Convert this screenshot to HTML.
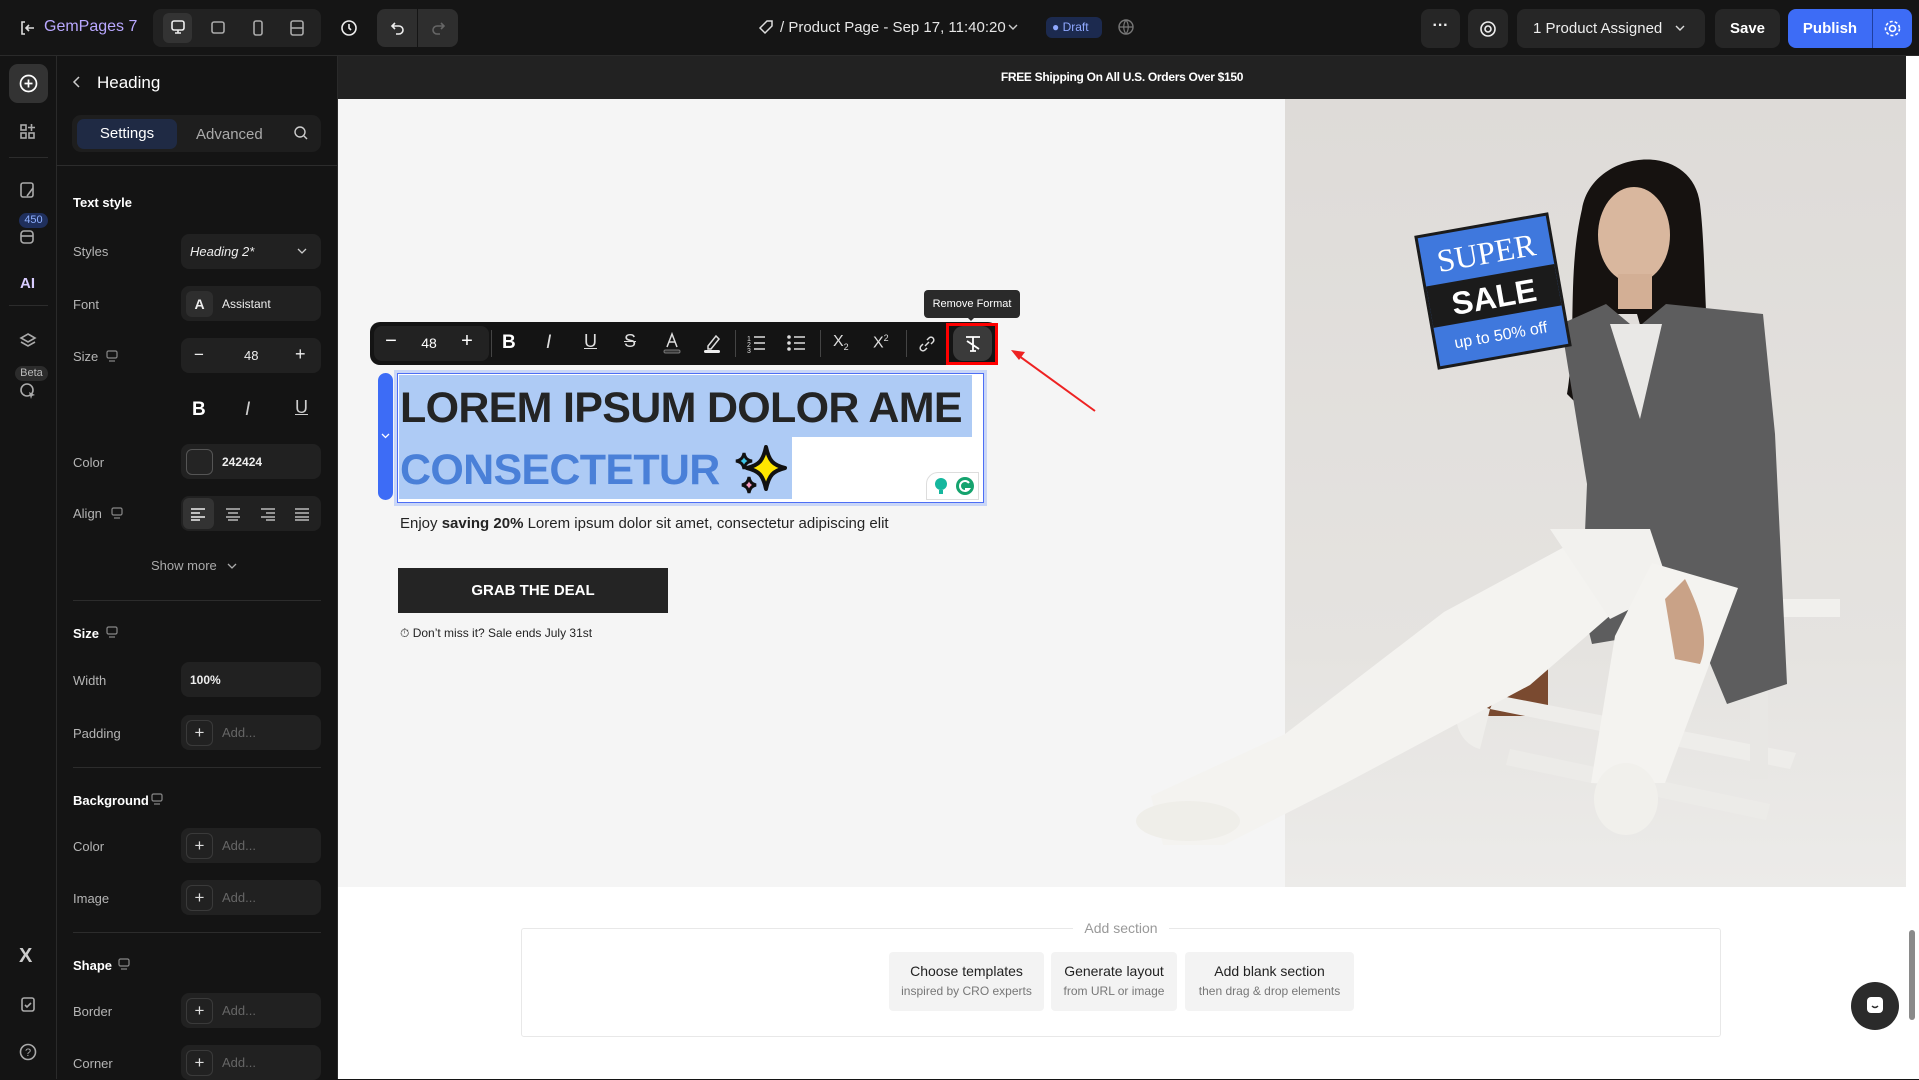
<!DOCTYPE html>
<html><head><meta charset="utf-8"><style>
*{box-sizing:border-box;margin:0;padding:0}
body{width:1919px;height:1079px;overflow:hidden;background:#141414;font-family:"Liberation Sans",sans-serif;position:relative}
.a{position:absolute}
.top{left:0;top:0;width:1919px;height:56px;background:#151515;border-bottom:1px solid #2a2a2a}
.box{background:#262626;border-radius:8px}
.lbl{position:absolute;left:73px;color:#b5b5b5;font-size:13px}
.ctl{position:absolute;left:181px;width:140px;height:35px;background:#212121;border-radius:8px;color:#eee;font-size:13px}
.plus{position:absolute;left:5px;top:5px;width:27px;height:26px;border:1px solid #3a3a3a;border-radius:6px;color:#ddd;text-align:center;line-height:24px;font-size:17px}
.add{position:absolute;left:41px;top:10px;color:#666;font-size:13px}
.sec{position:absolute;left:73px;color:#fff;font-size:13px;font-weight:bold}
.div{position:absolute;left:73px;width:248px;height:1px;background:#2c2c2c}
.ico{stroke:#aaa;fill:none;stroke-width:1.6}
.tb{position:absolute;top:10px;color:#fff;font-size:20px;text-align:center;width:30px}
</style></head><body>

<!-- top bar -->
<div class="a top"></div>
<svg class="a" style="left:18px;top:19px" width="18" height="18" viewBox="0 0 18 18"><path d="M7 3H4v12h3M8 9h8M11 6l-3 3 3 3" stroke="#ddd" stroke-width="1.6" fill="none"/></svg>
<div class="a" style="left:44px;top:18px;color:#b9a8ff;font-size:16px">GemPages 7</div>
<div class="a box" style="left:153px;top:9px;width:168px;height:38px;background:#222"></div>
<div class="a" style="left:163px;top:13px;width:29px;height:30px;background:#333;border-radius:6px"></div>
<svg class="a" style="left:169px;top:19px" width="18" height="18"><rect x="3" y="2" width="12" height="9" rx="2" stroke="#eee" stroke-width="1.6" fill="none"/><path d="M6 14h6M9 11v3" stroke="#eee" stroke-width="1.6"/></svg>
<svg class="a" style="left:209px;top:19px" width="18" height="18"><rect x="3" y="3" width="12" height="11" rx="2" class="ico" stroke="#777"/></svg>
<svg class="a" style="left:249px;top:19px" width="18" height="18"><rect x="5" y="2" width="8" height="14" rx="2" class="ico" stroke="#777"/></svg>
<svg class="a" style="left:288px;top:19px" width="18" height="18"><rect x="3" y="2" width="12" height="14" rx="2" class="ico" stroke="#777"/><path d="M3 9h12" class="ico" stroke="#777"/></svg>
<svg class="a" style="left:340px;top:19px" width="18" height="18"><circle cx="9" cy="9" r="7" stroke="#eee" stroke-width="1.6" fill="none"/><path d="M9 5v4l2 2" stroke="#eee" stroke-width="1.6" fill="none"/></svg>
<div class="a" style="left:377px;top:9px;width:81px;height:38px;background:#2e2e2e;border-radius:8px"></div>
<div class="a" style="left:417px;top:9px;width:1px;height:38px;background:#151515"></div>
<svg class="a" style="left:389px;top:19px" width="18" height="18"><path d="M6 4L3 7l3 3M3 7h7a4 4 0 010 8H7" stroke="#eee" stroke-width="1.6" fill="none"/></svg>
<svg class="a" style="left:429px;top:19px" width="18" height="18"><path d="M12 4l3 3-3 3M15 7H8a4 4 0 000 8h3" stroke="#666" stroke-width="1.6" fill="none"/></svg>
<svg class="a" style="left:758px;top:19px" width="16" height="16"><path d="M9 2h5v5l-7 7-5-5z" stroke="#ddd" stroke-width="1.5" fill="none"/></svg>
<div class="a" style="left:780px;top:19px;color:#e6e6e6;font-size:15px">/ Product Page - Sep 17, 11:40:20</div>
<svg class="a" style="left:1007px;top:22px" width="12" height="10"><path d="M2 3l4 4 4-4" stroke="#ccc" stroke-width="1.4" fill="none"/></svg>
<div class="a" style="left:1046px;top:17px;width:56px;height:21px;background:#1c2a4f;border-radius:6px;color:#8fa8ff;font-size:12px;line-height:21px;padding-left:6px">● Draft</div>
<svg class="a" style="left:1117px;top:18px" width="18" height="18"><circle cx="9" cy="9" r="7" stroke="#777" stroke-width="1.4" fill="none"/><path d="M2 9h14M9 2c-3 4-3 10 0 14M9 2c3 4 3 10 0 14" stroke="#777" stroke-width="1.2" fill="none"/></svg>
<div class="a box" style="left:1421px;top:9px;width:39px;height:39px;color:#eee;text-align:center;line-height:34px;font-size:16px;font-weight:bold">···</div>
<div class="a box" style="left:1468px;top:9px;width:40px;height:39px"></div>
<svg class="a" style="left:1478px;top:19px" width="20" height="20"><circle cx="10" cy="10" r="7" stroke="#eee" stroke-width="1.6" fill="none"/><circle cx="10" cy="10" r="3" stroke="#eee" stroke-width="1.6" fill="none"/></svg>
<div class="a box" style="left:1517px;top:9px;width:188px;height:39px;color:#eee;font-size:15px;line-height:39px;padding-left:16px">1 Product Assigned</div>
<svg class="a" style="left:1674px;top:23px" width="12" height="10"><path d="M2 3l4 4 4-4" stroke="#ddd" stroke-width="1.4" fill="none"/></svg>
<div class="a box" style="left:1715px;top:9px;width:65px;height:39px;color:#fff;font-size:15px;line-height:39px;text-align:center;font-weight:bold">Save</div>
<div class="a" style="left:1788px;top:9px;width:124px;height:39px;background:#3d6cf6;border-radius:8px"></div>
<div class="a" style="left:1788px;top:9px;width:84px;height:39px;color:#fff;font-size:15px;line-height:39px;text-align:center;font-weight:bold">Publish</div>
<div class="a" style="left:1872px;top:9px;width:1px;height:39px;background:#1f3fa0"></div>
<svg class="a" style="left:1883px;top:19px" width="19" height="19"><circle cx="9.5" cy="9.5" r="3" stroke="#fff" stroke-width="1.6" fill="none"/><circle cx="9.5" cy="9.5" r="7" stroke="#fff" stroke-width="1.6" fill="none" stroke-dasharray="3 2"/></svg>

<!-- rail -->
<div class="a" style="left:56px;top:56px;width:1px;height:1023px;background:#2a2a2a"></div>
<div class="a" style="left:9px;top:64px;width:39px;height:39px;background:#333;border-radius:9px"></div>
<svg class="a" style="left:18px;top:73px" width="21" height="21"><circle cx="10.5" cy="10.5" r="8" stroke="#fff" stroke-width="1.7" fill="none"/><path d="M10.5 6.5v8M6.5 10.5h8" stroke="#fff" stroke-width="1.7"/></svg>
<svg class="a" style="left:19px;top:123px" width="18" height="18"><rect x="2" y="2" width="5" height="5" class="ico"/><rect x="2" y="10" width="5" height="5" class="ico"/><rect x="10" y="10" width="5" height="5" class="ico"/><path d="M12.5 1v7M9 4.5h7" class="ico"/></svg>
<div class="a" style="left:9px;top:157px;width:39px;height:1px;background:#2c2c2c"></div>
<svg class="a" style="left:19px;top:181px" width="18" height="18"><rect x="2" y="2" width="12" height="14" rx="2" class="ico"/><path d="M8 15l6-8" class="ico"/></svg>
<div class="a" style="left:19px;top:213px;width:29px;height:15px;background:#1f2f5c;border-radius:8px;color:#8fb0ff;font-size:11px;text-align:center;line-height:15px">450</div>
<svg class="a" style="left:19px;top:229px" width="18" height="16"><rect x="2" y="2" width="12" height="12" rx="3" class="ico"/><path d="M2 7h12" class="ico"/></svg>
<div class="a" style="left:20px;top:275px;color:#d8ccff;font-size:15px;font-weight:bold">AI</div>
<div class="a" style="left:9px;top:305px;width:39px;height:1px;background:#2c2c2c"></div>
<svg class="a" style="left:19px;top:332px" width="18" height="18"><path d="M9 2l7 4-7 4-7-4z M2 10l7 4 7-4" class="ico"/></svg>
<div class="a" style="left:15px;top:366px;width:33px;height:15px;background:#2c2c2c;border-radius:8px;color:#bbb;font-size:11px;text-align:center;line-height:15px">Beta</div>
<svg class="a" style="left:19px;top:382px" width="18" height="18"><circle cx="8" cy="8" r="6" class="ico"/><path d="M10 10l6 3-3 1-1 3z" fill="#aaa"/></svg>
<div class="a" style="left:19px;top:945px;color:#ccc;font-size:20px;font-weight:bold">X</div>
<svg class="a" style="left:19px;top:995px" width="18" height="18"><rect x="3" y="3" width="12" height="13" rx="2" class="ico"/><path d="M6 10l2 2 4-4" class="ico"/></svg>
<svg class="a" style="left:19px;top:1043px" width="18" height="18"><circle cx="9" cy="9" r="7.5" class="ico"/><text x="9" y="13" fill="#aaa" font-size="11" text-anchor="middle" font-family="Liberation Sans">?</text></svg>

<!-- sidebar -->
<div class="a" style="left:337px;top:56px;width:1px;height:1023px;background:#2a2a2a"></div>
<svg class="a" style="left:71px;top:75px" width="12" height="14"><path d="M8 2L3 7l5 5" stroke="#ccc" stroke-width="1.5" fill="none"/></svg>
<div class="a" style="left:97px;top:73px;color:#fff;font-size:17px">Heading</div>
<div class="a" style="left:72px;top:115px;width:249px;height:37px;background:#1e1e1e;border-radius:9px"></div>
<div class="a" style="left:77px;top:119px;width:100px;height:30px;background:#1f2a44;border-radius:7px;color:#fff;font-size:15px;text-align:center;line-height:30px">Settings</div>
<div class="a" style="left:196px;top:126px;color:#aaa;font-size:15px">Advanced</div>
<svg class="a" style="left:293px;top:125px" width="16" height="16"><circle cx="7" cy="7" r="5" stroke="#ccc" stroke-width="1.4" fill="none"/><path d="M11 11l3 3" stroke="#ccc" stroke-width="1.4"/></svg>
<div class="a" style="left:56px;top:165px;width:281px;height:1px;background:#2c2c2c"></div>

<div class="sec" style="top:195px">Text style</div>
<div class="lbl" style="top:244px">Styles</div>
<div class="ctl" style="top:234px"><span class="a" style="left:9px;top:10px;font-style:italic">Heading 2*</span><svg class="a" style="left:116px;top:13px" width="10" height="8"><path d="M1 2l4 4 4-4" stroke="#ccc" stroke-width="1.3" fill="none"/></svg></div>
<div class="lbl" style="top:297px">Font</div>
<div class="ctl" style="top:286px"><div class="a" style="left:5px;top:5px;width:27px;height:26px;background:#2e2e2e;border-radius:6px;text-align:center;line-height:26px;font-size:14px;font-weight:bold">A</div><span class="a" style="left:41px;top:11px;font-size:12px">Assistant</span></div>
<div class="lbl" style="top:349px">Size</div>
<svg class="a" style="left:105px;top:349px" width="14" height="14"><rect x="2" y="2" width="10" height="7" rx="1.5" stroke="#888" stroke-width="1.2" fill="none"/><path d="M4 12h6" stroke="#888" stroke-width="1.2"/></svg>
<div class="ctl" style="top:338px"><span class="a" style="left:13px;top:7px;font-size:17px">−</span><span class="a" style="left:63px;top:10px">48</span><span class="a" style="left:114px;top:6px;font-size:18px">+</span></div>
<div class="a" style="left:192px;top:399px;color:#fff;font-size:19px;font-weight:bold">B</div>
<div class="a" style="left:245px;top:399px;color:#ccc;font-size:19px;font-style:italic">I</div>
<div class="a" style="left:295px;top:397px;color:#ccc;font-size:18px;text-decoration:underline">U</div>
<div class="lbl" style="top:455px">Color</div>
<div class="ctl" style="top:444px"><div class="a" style="left:5px;top:5px;width:27px;height:26px;background:#242424;border:1px solid #555;border-radius:6px"></div><span class="a" style="left:41px;top:11px;font-size:12px;font-weight:bold">242424</span></div>
<div class="lbl" style="top:506px">Align</div>
<svg class="a" style="left:110px;top:506px" width="14" height="14"><rect x="2" y="2" width="10" height="7" rx="1.5" stroke="#888" stroke-width="1.2" fill="none"/><path d="M4 12h6" stroke="#888" stroke-width="1.2"/></svg>
<div class="ctl" style="top:496px"><div class="a" style="left:2px;top:2px;width:31px;height:31px;background:#333;border-radius:6px"></div>
<svg class="a" style="left:10px;top:11px" width="120" height="14"><g stroke="#eee" stroke-width="1.4"><path d="M0 2h14M0 6h9M0 10h14M0 13h9"/></g><g stroke="#bbb" stroke-width="1.4"><path d="M35 2h14M37 6h10M35 10h14M37 13h10M70 2h14M75 6h9M70 10h14M75 13h9M104 2h14M104 6h14M104 10h14M104 13h14"/></g></svg></div>
<div class="a" style="left:151px;top:558px;color:#aaa;font-size:13px">Show more</div>
<svg class="a" style="left:227px;top:562px" width="10" height="8"><path d="M1 2l4 4 4-4" stroke="#aaa" stroke-width="1.3" fill="none"/></svg>
<div class="div" style="top:600px"></div>
<div class="sec" style="top:626px">Size</div>
<svg class="a" style="left:105px;top:625px" width="14" height="14"><rect x="2" y="2" width="10" height="7" rx="1.5" stroke="#888" stroke-width="1.2" fill="none"/><path d="M4 12h6" stroke="#888" stroke-width="1.2"/></svg>
<div class="lbl" style="top:673px">Width</div>
<div class="ctl" style="top:662px"><span class="a" style="left:9px;top:11px;font-size:12px;font-weight:bold">100%</span></div>
<div class="lbl" style="top:726px">Padding</div>
<div class="ctl" style="top:715px"><div class="plus">+</div><span class="add">Add...</span></div>
<div class="div" style="top:767px"></div>
<div class="sec" style="top:793px">Background</div>
<svg class="a" style="left:150px;top:792px" width="14" height="14"><rect x="2" y="2" width="10" height="7" rx="1.5" stroke="#888" stroke-width="1.2" fill="none"/><path d="M4 12h6" stroke="#888" stroke-width="1.2"/></svg>
<div class="lbl" style="top:839px">Color</div>
<div class="ctl" style="top:828px"><div class="plus">+</div><span class="add">Add...</span></div>
<div class="lbl" style="top:891px">Image</div>
<div class="ctl" style="top:880px"><div class="plus">+</div><span class="add">Add...</span></div>
<div class="div" style="top:932px"></div>
<div class="sec" style="top:958px">Shape</div>
<svg class="a" style="left:117px;top:957px" width="14" height="14"><rect x="2" y="2" width="10" height="7" rx="1.5" stroke="#888" stroke-width="1.2" fill="none"/><path d="M4 12h6" stroke="#888" stroke-width="1.2"/></svg>
<div class="lbl" style="top:1004px">Border</div>
<div class="ctl" style="top:993px"><div class="plus">+</div><span class="add">Add...</span></div>
<div class="lbl" style="top:1056px">Corner</div>
<div class="ctl" style="top:1045px"><div class="plus">+</div><span class="add">Add...</span></div>

<!-- canvas -->
<div class="a" style="left:338px;top:56px;width:1568px;height:1023px;background:#fff"></div>
<div class="a" style="left:338px;top:56px;width:1568px;height:43px;background:#222;color:#fff;font-size:12px;font-weight:bold;text-align:center;line-height:43px;letter-spacing:-0.3px">FREE Shipping On All U.S. Orders Over $150</div>
<div class="a" style="left:338px;top:99px;width:947px;height:788px;background:#f5f5f5"></div>

<!-- image -->
<svg class="a" style="left:1130px;top:99px" width="776" height="788" viewBox="0 0 776 788">
<defs><linearGradient id="bg" x1="0" y1="0" x2="0" y2="1"><stop offset="0" stop-color="#dedbd8"/><stop offset="0.7" stop-color="#e5e3e0"/><stop offset="1" stop-color="#ecebe9"/></linearGradient></defs>
<rect x="155" width="621" height="788" fill="url(#bg)"/>
<!-- stool -->
<path d="M360 500h350v18H360z" fill="#f1f0ed"/>
<path d="M354 537h64v80h-64z" fill="#7a4a30"/>
<path d="M330 600c-10 20 0 45 20 50l10-40z" fill="#efeeeb"/>
<path d="M360 610l300 60 6-16-300-58z" fill="#eeedea"/>
<path d="M620 530h18v150h-18z" fill="#e8e7e4"/>
<path d="M380 650l260 55-4 16-260-55z" fill="#ecebe8"/>
<!-- hair -->
<path d="M452 110c10-60 110-70 118-5 6 50 4 120 12 190l-50 10-25-90h-40l-20 90-10-10c10-60 0-120 15-185z" fill="#161210"/>
<!-- jacket -->
<path d="M431 225l45-20 30 25 30-25 97 10 12 120 12 250-60 20-25-60-50-10-60 10-10-40 5-120z" fill="#5d5d5e"/>
<path d="M480 225l52 0-22 95z" fill="#e9e8e6"/>
<!-- face -->
<ellipse cx="504" cy="136" rx="36" ry="48" fill="#d9b79e"/>
<path d="M488 175h34v35h-34z" fill="#d3af95"/>
<!-- pants -->
<path d="M449 440L498 501L400 586L216 684L94 746L33 746L21 697L155 635L314 513z" fill="#f4f3f0"/>
<path d="M420 430h100l20 60-60 30z" fill="#f2f1ee"/>
<path d="M522 464L608 489L535 684L461 684L485 537z" fill="#f4f3f0"/>
<!-- hands -->
<path d="M555 480c15 30 25 60 15 85l-25-5-10-60z" fill="#c9a287"/>
<!-- shoes -->
<ellipse cx="58" cy="722" rx="52" ry="20" fill="#efeee9"/>
<ellipse cx="496" cy="700" rx="32" ry="36" fill="#f1f0ec"/>
<!-- sale badge -->
<g transform="translate(363 192) rotate(-10) translate(-68 -68)">
<rect x="0" y="0" width="136" height="136" fill="#1b1b1b"/>
<rect x="3" y="3" width="130" height="130" fill="#3f78dd"/>
<rect x="3" y="52" width="130" height="42" fill="#1b1b1b"/>
<text x="68" y="40" font-family="Liberation Serif" font-size="32" fill="#fff" text-anchor="middle">SUPER</text>
<text x="68" y="85" font-family="Liberation Sans" font-weight="bold" font-size="32" fill="#fff" text-anchor="middle">SALE</text>
<text x="68" y="118" font-family="Liberation Sans" font-size="16" fill="#fff" text-anchor="middle">up to 50% off</text>
</g>
</svg>

<!-- toolbar -->
<div class="a" style="left:924px;top:290px;width:96px;height:28px;background:#2a2a2a;border-radius:4px;color:#fff;font-size:11px;text-align:center;line-height:28px">Remove Format</div>
<div class="a" style="left:966px;top:316px;width:0;height:0;border-left:5px solid transparent;border-right:5px solid transparent;border-top:5px solid #2a2a2a"></div>
<div class="a" style="left:370px;top:322px;width:628px;height:43px;background:#141414;border-radius:10px"></div>
<div class="a" style="left:374px;top:326px;width:115px;height:35px;background:#222;border-radius:8px"></div>
<div class="tb" style="left:376px;top:330px">−</div>
<div class="a" style="left:419px;top:335px;color:#fff;font-size:14px;width:20px;text-align:center">48</div>
<div class="tb" style="left:452px;top:330px">+</div>
<div class="a" style="left:491px;top:330px;width:1px;height:27px;background:#444"></div>
<div class="a" style="left:502px;top:332px;color:#fff;font-size:19px;font-weight:bold">B</div>
<div class="a" style="left:546px;top:332px;color:#ddd;font-size:19px;font-style:italic">I</div>
<div class="a" style="left:584px;top:331px;color:#ddd;font-size:18px;text-decoration:underline">U</div>
<div class="a" style="left:624px;top:331px;color:#ddd;font-size:18px;text-decoration:line-through">S</div>
<svg class="a" style="left:660px;top:331px" width="24" height="24"><path d="M7 16l5-13 5 13M9 11h6" stroke="#ddd" stroke-width="1.5" fill="none"/><rect x="4" y="19" width="16" height="3" rx="1.5" fill="#333" stroke="#777"/></svg>
<svg class="a" style="left:700px;top:331px" width="24" height="24"><path d="M8 15l8-10 3 3-8 10H8z" stroke="#ddd" stroke-width="1.5" fill="none"/><rect x="4" y="19" width="16" height="3" rx="1.5" fill="#eee"/></svg>
<div class="a" style="left:735px;top:330px;width:1px;height:27px;background:#444"></div>
<svg class="a" style="left:746px;top:332px" width="22" height="22"><path d="M8 5h11M8 11h11M8 17h11" stroke="#ddd" stroke-width="1.6"/><text x="1" y="9" fill="#ddd" font-size="7" font-family="Liberation Sans">1</text><text x="1" y="15" fill="#ddd" font-size="7" font-family="Liberation Sans">2</text><text x="1" y="21" fill="#ddd" font-size="7" font-family="Liberation Sans">3</text></svg>
<svg class="a" style="left:786px;top:332px" width="22" height="22"><path d="M8 5h11M8 11h11M8 17h11" stroke="#ddd" stroke-width="1.6"/><circle cx="3" cy="5" r="1.8" fill="#ddd"/><circle cx="3" cy="11" r="1.8" fill="#ddd"/><circle cx="3" cy="17" r="1.8" fill="#ddd"/></svg>
<div class="a" style="left:820px;top:330px;width:1px;height:27px;background:#444"></div>
<div class="a" style="left:833px;top:333px;color:#ddd;font-size:16px">X<sub style="font-size:9px">2</sub></div>
<div class="a" style="left:873px;top:333px;color:#ddd;font-size:16px">X<sup style="font-size:9px">2</sup></div>
<div class="a" style="left:906px;top:330px;width:1px;height:27px;background:#444"></div>
<svg class="a" style="left:916px;top:333px" width="22" height="22"><path d="M9 13l4-4M7 11l-2 2a2.5 2.5 0 004 4l2-2M15 11l2-2a2.5 2.5 0 00-4-4l-2 2" stroke="#ddd" stroke-width="1.5" fill="none"/></svg>
<div class="a" style="left:948px;top:330px;width:1px;height:27px;background:#444"></div>
<div class="a" style="left:953px;top:326px;width:39px;height:35px;background:#3a3a3a;border-radius:10px"></div>
<svg class="a" style="left:961px;top:332px" width="24" height="24"><path d="M5 5h14M12 5v14M9 19h6M6 9l12 8" stroke="#fff" stroke-width="1.8" fill="none"/></svg>
<div class="a" style="left:946px;top:323px;width:52px;height:42px;border:3px solid #f00"></div>
<svg class="a" style="left:1005px;top:343px" width="100" height="75"><path d="M90 68L10 10" stroke="#e22" stroke-width="2"/><path d="M6 7l14 2-6 8z" fill="#e22"/></svg>

<!-- heading -->
<div class="a" style="left:394px;top:370px;width:593px;height:136px;background:#c9d6f7"></div>
<div class="a" style="left:397px;top:373px;width:587px;height:130px;background:#fff;border:1px solid #4d6ef5"></div>
<div class="a" style="left:399px;top:375px;width:573px;height:62px;background:#aecbf5"></div>
<div class="a" style="left:399px;top:437px;width:393px;height:62px;background:#aecbf5"></div>
<div class="a" style="left:378px;top:373px;width:15px;height:127px;background:#3d6cf6;border-radius:8px"></div>
<svg class="a" style="left:381px;top:432px" width="9" height="8"><path d="M1 2l3.5 3.5L8 2" stroke="#fff" stroke-width="1.3" fill="none"/></svg>
<div class="a" style="left:400px;top:377px;font-size:43px;font-weight:bold;letter-spacing:-0.7px;line-height:62px;color:#242424;white-space:nowrap">LOREM IPSUM DOLOR AME</div>
<div class="a" style="left:400px;top:439px;font-size:43px;font-weight:bold;letter-spacing:-0.7px;line-height:62px;color:#4a80d8;white-space:nowrap">CONSECTETUR</div>
<svg class="a" style="left:732px;top:443px" width="56" height="54" viewBox="0 0 56 54"><path d="M34 4c3 14 7 18 19 21-12 3-16 7-19 21-3-14-7-18-19-21 12-3 16-7 19-21z" fill="#ffe600" stroke="#111" stroke-width="4" stroke-linejoin="round"/><path d="M12 10c1 5 3 7 8 8-5 1-7 3-8 8-1-5-3-7-8-8 5-1 7-3 8-8z" fill="#3ec6e8" stroke="#111" stroke-width="3"/><path d="M17 34c1 5 3 7 7 8-4 1-6 3-7 8-1-5-3-7-7-8 4-1 6-3 7-8z" fill="#f49ac1" stroke="#111" stroke-width="3"/></svg>
<div class="a" style="left:926px;top:472px;width:53px;height:28px;background:#fff;border-radius:12px 0 0 0;border:1px solid #ddd"></div>
<svg class="a" style="left:932px;top:476px" width="44" height="20"><circle cx="9" cy="8" r="6" fill="#15b79e"/><rect x="7" y="14" width="4" height="4" fill="#15b79e"/><circle cx="33" cy="10" r="9" fill="#15a36e"/><path d="M37 7a5 5 0 10 0 6h-4" stroke="#fff" stroke-width="2" fill="none"/></svg>

<div class="a" style="left:400px;top:515px;font-size:15px;color:#242424;white-space:nowrap">Enjoy <b>saving 20%</b> Lorem ipsum dolor sit amet, consectetur adipiscing elit</div>
<div class="a" style="left:398px;top:568px;width:270px;height:45px;background:#242424;color:#fff;font-size:15px;font-weight:bold;text-align:center;line-height:45px">GRAB THE DEAL</div>
<div class="a" style="left:400px;top:626px;font-size:12px;color:#242424">⏱ Don’t miss it? Sale ends July 31st</div>

<!-- add section -->
<div class="a" style="left:521px;top:928px;width:1200px;height:109px;border:1px solid #e8e8e8;border-radius:3px"></div>
<div class="a" style="left:1073px;top:918px;width:96px;height:20px;background:#fff;color:#999;font-size:14px;text-align:center;line-height:20px">Add section</div>
<div class="a" style="left:889px;top:952px;width:155px;height:59px;background:#f3f3f3;border-radius:4px;text-align:center"><div style="margin-top:11px;font-size:14px;color:#222">Choose templates</div><div style="margin-top:5px;font-size:12px;color:#777">inspired by CRO experts</div></div>
<div class="a" style="left:1051px;top:952px;width:126px;height:59px;background:#f3f3f3;border-radius:4px;text-align:center"><div style="margin-top:11px;font-size:14px;color:#222">Generate layout</div><div style="margin-top:5px;font-size:12px;color:#777">from URL or image</div></div>
<div class="a" style="left:1185px;top:952px;width:169px;height:59px;background:#f3f3f3;border-radius:4px;text-align:center"><div style="margin-top:11px;font-size:14px;color:#222">Add blank section</div><div style="margin-top:5px;font-size:12px;color:#777">then drag &amp; drop elements</div></div>
<div class="a" style="left:1851px;top:982px;width:48px;height:48px;border-radius:50%;background:#2b2b2b"></div>
<svg class="a" style="left:1864px;top:995px" width="22" height="22"><rect x="3" y="2" width="16" height="16" rx="4" fill="#fff"/><path d="M8 11q3 3 6 0" stroke="#2b2b2b" stroke-width="1.5" fill="none"/></svg>
<!-- scrollbar -->
<div class="a" style="left:1906px;top:56px;width:13px;height:1023px;background:#fff"></div>
<div class="a" style="left:1909px;top:930px;width:6px;height:90px;background:#8a8a8a;border-radius:3px"></div>
</body></html>
